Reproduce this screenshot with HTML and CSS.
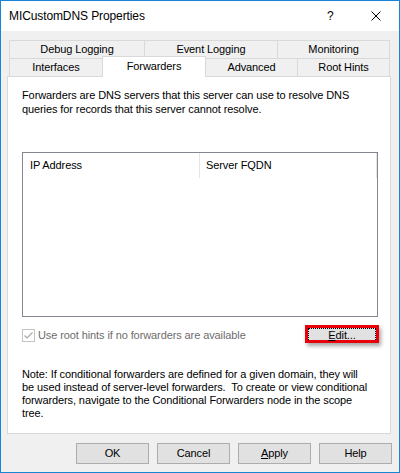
FILE: index.html
```html
<!DOCTYPE html>
<html>
<head>
<meta charset="utf-8">
<title>MICustomDNS Properties</title>
<link rel="stylesheet" href="styles.css">
</head>
<body>
<div class="window">
  <div class="titlebar">
    <span class="title">MICustomDNS Properties</span>
    <span class="help">?</span>
    <span class="close"><svg width="10" height="10" viewBox="0 0 10 10"><path d="M0.5 0.5L9.5 9.5M9.5 0.5L0.5 9.5" stroke="#000" stroke-width="1" fill="none"/></svg></span>
  </div>
  <div class="client">
    <div class="tabs">
      <div class="tabrow">
        <div class="tab first w136">Debug Logging</div>
        <div class="tab w133">Event Logging</div>
        <div class="tab w112">Monitoring</div>
      </div>
      <div class="tabrow">
        <div class="tab first w93 noright">Interfaces</div>
        <div class="tab selected">Forwarders</div>
        <div class="tab w92">Advanced</div>
        <div class="tab w92">Root Hints</div>
      </div>
    </div>
    <div class="panel">
      <p class="intro">Forwarders are DNS servers that this server can use to resolve DNS<br>queries for records that this server cannot resolve.</p>
      <div class="list">
        <div class="list-header">
          <div class="col col-ip">IP Address</div>
          <div class="col col-fqdn">Server FQDN</div>
        </div>
      </div>
      <div class="options">
        <span class="check-box"><svg width="13" height="13" viewBox="0 0 13 13"><rect x="0.5" y="0.5" width="12" height="12" fill="#fff" stroke="#c4c4c4"/><path d="M2.5 6.5L5 9L10.5 3.5" stroke="#a8a8a8" stroke-width="1.2" fill="none"/></svg></span>
        <span class="check-label">Use root hints if no forwarders are available</span>
        <div class="edit-highlight"><div class="edit-btn"><u>E</u>dit...</div></div>
      </div>
      <p class="note">Note: If conditional forwarders are defined for a given domain, they will<br>be used instead of server-level forwarders.&nbsp; To create or view conditional<br>forwarders, navigate to the Conditional Forwarders node in the scope<br>tree.</p>
    </div>
    <div class="buttons">
      <div class="btn">OK</div>
      <div class="btn">Cancel</div>
      <div class="btn"><u>A</u>pply</div>
      <div class="btn">Help</div>
    </div>
  </div>
</div>
</body>
</html>
```

FILE: styles.css
```css
* { box-sizing: border-box; }
html, body { margin: 0; padding: 0; }
body {
  font-family: "Liberation Sans", Arial, sans-serif;
  font-size: 11px;
  letter-spacing: -0.1px;
  color: #000;
  background: #fff;
}
.window {
  width: 400px;
  height: 473px;
  border: 1px solid #1883d7;
  background: #f0f0f0;
  display: flex;
  flex-direction: column;
}
.titlebar {
  height: 30px;
  background: #fff;
  display: flex;
  align-items: center;
  flex: none;
}
.title {
  padding-left: 8px;
  font-size: 12px;
}
.help {
  margin-left: auto;
  font-size: 12px;
  width: 8px;
  margin-right: 36px;
}
.close {
  display: flex;
  margin-right: 18px;
  margin-top: -1px;
}
.client {
  padding: 9px 0 0 6px;
  flex: 1;
}
.tabs {
  margin-left: 2px;
}
.tabrow {
  display: flex;
  height: 18px;
}
.tab {
  height: 18px;
  border-top: 1px solid #d9d9d9;
  border-right: 1px solid #d9d9d9;
  background: #f0f0f0;
  text-align: center;
  line-height: 17px;
  white-space: nowrap;
}
.tab.first { border-left: 1px solid #d9d9d9; }
.tab.noright { border-right: none; }
.w136 { width: 136px; }
.w133 { width: 133px; }
.w112 { width: 112px; }
.w93 { width: 93px; }
.w92 { width: 92px; }
.tab.selected {
  width: 104px;
  height: 21px;
  margin-top: -2px;
  background: #fff;
  border-left: 1px solid #d9d9d9;
  line-height: 18px;
  position: relative;
  z-index: 1;
}
.panel {
  width: 384px;
  height: 358px;
  background: #fff;
  border: 1px solid #d9d9d9;
  padding: 11px 0 0 14px;
}
.intro {
  margin: 0;
  line-height: 14px;
}
.list {
  margin-top: 36px;
  width: 356px;
  height: 165px;
  border: 1px solid #828790;
}
.list-header {
  display: flex;
  height: 25px;
}
.col {
  width: 177px;
  border-right: 1px solid #e5e5e5;
  line-height: 25px;
}
.col-ip { padding-left: 7px; }
.col-fqdn { padding-left: 6px; }
.options {
  margin-top: 8px;
  width: 357px;
  height: 17px;
  display: flex;
  align-items: center;
}
.check-box {
  display: flex;
  width: 13px;
  height: 13px;
  margin-right: 3px;
  margin-top: 4px;
}
.check-label {
  color: #6d6d6d;
  margin-top: 3px;
}
.edit-highlight {
  margin-left: auto;
  width: 74px;
  height: 18px;
  border: 3px solid #e8000b;
  box-shadow: 2px 3px 4px rgba(0, 0, 0, 0.35);
}
.edit-btn {
  height: 100%;
  background: #e1e1e1;
  border-top: 1px dotted #000;
  border-left: 1px dotted #000;
  border-right: 1px dotted #000;
  text-align: center;
  line-height: 12px;
}
.note {
  margin: 26px 0 0 0;
  line-height: 13px;
}
.buttons {
  display: flex;
  justify-content: flex-end;
  gap: 8px;
  margin-top: 9px;
  padding-right: 7px;
}
.btn {
  width: 73px;
  height: 21px;
  background: #e1e1e1;
  border: 1px solid #adadad;
  text-align: center;
  line-height: 19px;
}
```
